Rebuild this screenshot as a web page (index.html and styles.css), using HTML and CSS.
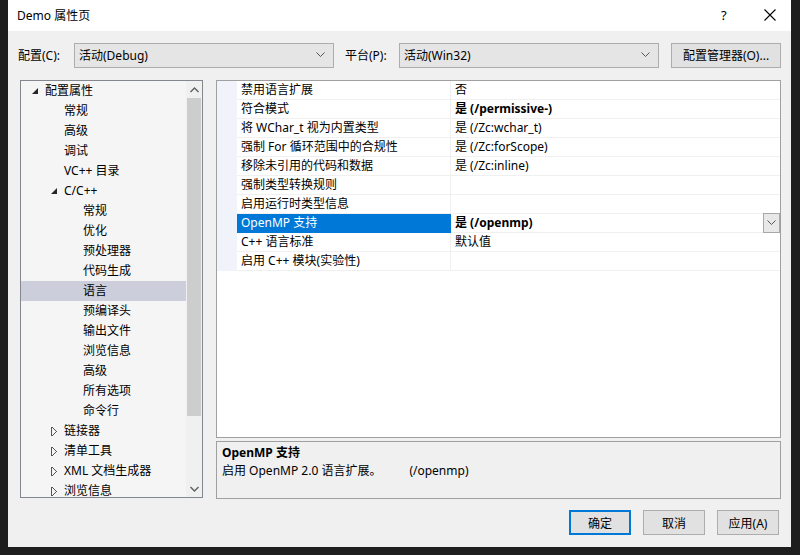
FILE: index.html
```html
<html lang="zh-CN">
<head>
  <title>Demo 属性页</title>
  <link rel="stylesheet" href="styles.css">
</head>
<body>
<div class="dialog">
  <div class="titlebar">
    <span class="title">Demo 属性页</span>
    <span class="help">?</span>
    <span class="close">
      <svg width="12" height="12" viewBox="0 0 12 12"><path d="M0.5 0.5L11.5 11.5M11.5 0.5L0.5 11.5" stroke="#000" stroke-width="1.1"/></svg>
    </span>
  </div>

  <div class="toolbar">
    <span class="label">配置(C):</span>
    <div class="combo combo-config">
      <span>活动(Debug)</span>
      <svg width="9" height="6" viewBox="0 0 9 6"><path d="M0.5 0.5L4.5 4.5L8.5 0.5" fill="none" stroke="#555"/></svg>
    </div>
    <span class="label label-platform">平台(P):</span>
    <div class="combo combo-platform">
      <span>活动(Win32)</span>
      <svg width="9" height="6" viewBox="0 0 9 6"><path d="M0.5 0.5L4.5 4.5L8.5 0.5" fill="none" stroke="#555"/></svg>
    </div>
    <div class="btn btn-manager">配置管理器(O)...</div>
  </div>

  <div class="main">
    <div class="tree">
      <div class="tree-rows">
        <div class="row lv0"><span class="tri open"></span>配置属性</div>
        <div class="row lv1">常规</div>
        <div class="row lv1">高级</div>
        <div class="row lv1">调试</div>
        <div class="row lv1">VC++ 目录</div>
        <div class="row lv1 node"><span class="tri open"></span>C/C++</div>
        <div class="row lv2">常规</div>
        <div class="row lv2">优化</div>
        <div class="row lv2">预处理器</div>
        <div class="row lv2">代码生成</div>
        <div class="row lv2 selected">语言</div>
        <div class="row lv2">预编译头</div>
        <div class="row lv2">输出文件</div>
        <div class="row lv2">浏览信息</div>
        <div class="row lv2">高级</div>
        <div class="row lv2">所有选项</div>
        <div class="row lv2">命令行</div>
        <div class="row lv1 node"><span class="tri closed"></span>链接器</div>
        <div class="row lv1 node"><span class="tri closed"></span>清单工具</div>
        <div class="row lv1 node"><span class="tri closed"></span>XML 文档生成器</div>
        <div class="row lv1 node"><span class="tri closed"></span>浏览信息</div>
      </div>
      <div class="vscroll">
        <div class="arrow">
          <svg width="9" height="6" viewBox="0 0 9 6"><path d="M0.5 5L4.5 1L8.5 5" fill="none" stroke="#606060" stroke-width="1.4"/></svg>
        </div>
        <div class="track"><div class="thumb"></div></div>
        <div class="arrow">
          <svg width="9" height="6" viewBox="0 0 9 6"><path d="M0.5 1L4.5 5L8.5 1" fill="none" stroke="#606060" stroke-width="1.4"/></svg>
        </div>
      </div>
    </div>

    <div class="right">
      <div class="grid">
        <div class="prop"><span class="name">禁用语言扩展</span><span class="value">否</span></div>
        <div class="prop"><span class="name">符合模式</span><span class="value bold">是 (/permissive-)</span></div>
        <div class="prop"><span class="name">将 WChar_t 视为内置类型</span><span class="value">是 (/Zc:wchar_t)</span></div>
        <div class="prop"><span class="name">强制 For 循环范围中的合规性</span><span class="value">是 (/Zc:forScope)</span></div>
        <div class="prop"><span class="name">移除未引用的代码和数据</span><span class="value">是 (/Zc:inline)</span></div>
        <div class="prop"><span class="name">强制类型转换规则</span><span class="value"></span></div>
        <div class="prop"><span class="name">启用运行时类型信息</span><span class="value"></span></div>
        <div class="prop active"><span class="name">OpenMP 支持</span><span class="value bold">是 (/openmp)<span class="drop"><svg width="9" height="6" viewBox="0 0 9 6"><path d="M0.5 0.5L4.5 4.5L8.5 0.5" fill="none" stroke="#555"/></svg></span></span></div>
        <div class="prop"><span class="name">C++ 语言标准</span><span class="value">默认值</span></div>
        <div class="prop"><span class="name">启用 C++ 模块(实验性)</span><span class="value"></span></div>
      </div>
      <div class="desc">
        <div class="desc-title">OpenMP 支持</div>
        <div>启用 OpenMP 2.0 语言扩展。<span class="desc-switch">(/openmp)</span></div>
      </div>
    </div>
  </div>

  <div class="buttons">
    <div class="btn btn-ok">确定</div>
    <div class="btn">取消</div>
    <div class="btn">应用(A)</div>
  </div>
</div>
</body>
</html>
```

FILE: styles.css
```css
body {
  margin: 0;
  background: #1e1e1e;
  font-family: "Noto Sans", "Noto Sans CJK SC", sans-serif;
  font-size: 12px;
  color: #000;
  overflow: hidden;
}

.dialog {
  margin-left: 8px;
  width: 783px;
  height: 547px;
  background: #f0f0f0;
}

.titlebar {
  height: 31px;
  background: #fff;
  display: flex;
  align-items: center;
  position: relative;
}
.title { margin-left: 9px; margin-top: -1px; font-size: 12px; }
.help { position: absolute; left: 713px; top: 6px; font-size: 13px; }
.close { position: absolute; left: 756px; top: 9px; }

.toolbar {
  display: flex;
  align-items: center;
  margin-top: 11px;
  height: 26px;
}
.label { margin-left: 10px; width: 56px; }
.label-platform { margin-left: 11px; width: 54px; }

.combo {
  box-sizing: border-box;
  height: 25px;
  border: 1px solid #adadad;
  background: #e5e5e5;
  display: flex;
  align-items: center;
  justify-content: space-between;
  padding: 0 8px 0 4px;
}
.combo-config { width: 260px; }
.combo-platform { width: 260px; }

.btn {
  box-sizing: border-box;
  height: 25px;
  width: 62px;
  border: 1px solid #adadad;
  background: #e1e1e1;
  display: flex;
  align-items: center;
  justify-content: center;
}
.btn-manager { width: 110px; margin-left: 12px; }

.main {
  display: flex;
  margin-top: 12px;
  margin-left: 12px;
}

.tree {
  box-sizing: border-box;
  width: 183px;
  height: 418px;
  border: 1px solid #828790;
  background: #f5f5f5;
  display: flex;
  overflow: hidden;
}
.tree-rows { flex: 1; padding-top: 0; }
.row {
  height: 20px;
  line-height: 20px;
  white-space: nowrap;
  position: relative;
}
.lv0 { padding-left: 24px; }
.lv1 { padding-left: 43px; }
.lv2 { padding-left: 62px; }
.selected { background: #cccedb; }

.tri { position: absolute; top: 7px; }
.lv0 .tri { left: 11px; }
.lv1 .tri { left: 30px; }
.tri.open {
  width: 0;
  height: 0;
  border-left: 6px solid transparent;
  border-bottom: 6px solid #262626;
}
.tri.closed {
  top: 6px;
  width: 5px;
  height: 9px;
  background:
    linear-gradient(to top right, transparent 48%, #555 50%, transparent 58%) top / 5px 5px no-repeat,
    linear-gradient(to bottom right, transparent 48%, #555 50%, transparent 58%) bottom / 5px 5px no-repeat;
  border-left: 1px solid #555;
}

.vscroll {
  width: 16px;
  background: #f0f0f0;
  display: flex;
  flex-direction: column;
}
.arrow {
  height: 17px;
  display: flex;
  align-items: center;
  justify-content: center;
}
.track { flex: 1; padding: 0 1px; }
.thumb { height: 318px; background: #cdcdcd; }

.right { margin-left: 13px; }

.grid {
  box-sizing: border-box;
  width: 565px;
  height: 358px;
  border: 1px solid #a0a0a0;
  background: #fff;
  padding-top: 0;
}
.prop {
  display: flex;
  height: 19px;
  line-height: 18px;
  border-left: 20px solid #f0f3f9;
}
.prop .name {
  width: 214px;
  padding-left: 4px;
  box-sizing: border-box;
  border-bottom: 1px solid #f0f0f0;
  border-right: 1px solid #f0f0f0;
  white-space: nowrap;
}
.prop .value {
  flex: 1;
  padding-left: 4px;
  border-bottom: 1px solid #f0f0f0;
  position: relative;
  white-space: nowrap;
}
.bold { font-weight: bold; }
.active .name { background: #0078d7; color: #fff; border-color: #0078d7; }
.drop {
  position: absolute;
  right: 0;
  top: -1px;
  box-sizing: border-box;
  width: 17px;
  height: 20px;
  border: 1px solid #a8a8a8;
  background: #e8e8e8;
  display: flex;
  align-items: center;
  justify-content: center;
}

.desc {
  box-sizing: border-box;
  margin-top: 3px;
  width: 565px;
  height: 58px;
  border: 1px solid #a0a0a0;
  padding: 2px 5px;
  line-height: 18px;
}
.desc-title { font-weight: bold; }
.desc-switch { margin-left: 28px; }

.buttons {
  display: flex;
  justify-content: flex-end;
  gap: 12px;
  margin-top: 11px;
  margin-right: 12px;
}
.buttons .btn { width: 62px; height: 25px; }
.btn-ok { border: 2px solid #0078d7; }
```
